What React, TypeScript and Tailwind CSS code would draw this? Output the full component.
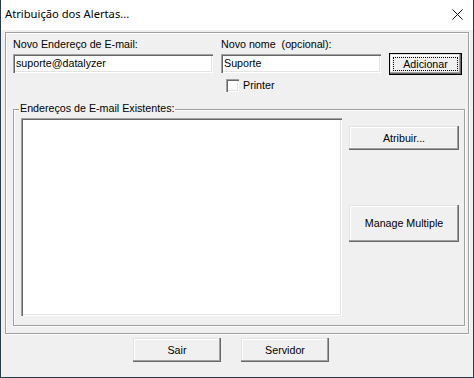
import React from "react";

const raised =
  "bg-[#f0f0f0] shadow-[inset_-1px_-1px_0_#696969,inset_-2px_-2px_0_#a0a0a0,inset_1px_1px_0_#e3e3e3,inset_2px_2px_0_#fff] flex items-center justify-center";
const sunken =
  "bg-white shadow-[inset_1px_1px_0_#a0a0a0,inset_2px_2px_0_#696969,inset_-1px_-1px_0_#fff,inset_-2px_-2px_0_#e3e3e3]";

function Field({ value }: { value: string }) {
  return (
    <div className={`${sunken} h-[19px] flex items-center pl-[3px] leading-[13px]`}>
      {value}
    </div>
  );
}

export default function App() {
  return (
    <div className="w-[474px] h-[378px] flex flex-col bg-[#f0f0f0] border-x border-b border-[#2b3b4e] overflow-hidden text-black font-['Liberation_Sans',Arial,sans-serif] text-[10.7px]">
      {/* title bar */}
      <div className="h-[30px] shrink-0 bg-white flex items-center justify-between pl-[4px] pr-[10px] pb-[1px]">
        <span className="font-['Noto_Sans',sans-serif] text-[11.2px] text-black">
          Atribuição dos Alertas...
        </span>
        <svg width="11" height="11" viewBox="0 0 11 11">
          <path d="M0.5 0.5 L10.5 10.5 M10.5 0.5 L0.5 10.5" stroke="#111" strokeWidth="1" />
        </svg>
      </div>

      <div className="flex-1 flex flex-col pl-[4px] pt-[2px]">
        {/* outer frame */}
        <div className="w-[464px] h-[302px] border border-[#a0a0a0] shadow-[1px_1px_0_#fff,inset_1px_1px_0_#fff] flex flex-col">
          <div className="flex pl-[7px] pt-[5px]">
            <div className="w-[200px] flex flex-col">
              <div className="h-[13px] leading-[13px]">Novo Endereço de E-mail:</div>
              <div className="mt-[3px]">
                <Field value="suporte@datalyzer" />
              </div>
            </div>
            <div className="w-[160px] ml-[8px] flex flex-col">
              <div className="h-[13px] leading-[13px] whitespace-pre">Novo nome  (opcional):</div>
              <div className="mt-[3px]">
                <Field value="Suporte" />
              </div>
              <div className="mt-[6px] pl-[5px] flex items-center">
                <div className={`${sunken} w-[13px] h-[13px]`} />
                <span className="ml-[4px] leading-[13px]">Printer</span>
              </div>
            </div>
            <div className="ml-[8px] mt-[15px] w-[73px] h-[22px] border border-black">
              <div className={`${raised} w-full h-full p-[3px]`}>
                <div className="w-full h-full border border-dotted border-black flex items-center justify-center leading-[13px]">
                  Adicionar
                </div>
              </div>
            </div>
          </div>

          {/* group box */}
          <div className="relative mt-[17px] ml-[7px] w-[452px] h-[217px] border border-[#a0a0a0] shadow-[1px_1px_0_#fff,inset_1px_1px_0_#fff]">
            <div className="absolute left-[5px] top-[-8px] px-[1px] bg-[#f0f0f0] leading-[13px]">
              Endereços de E-mail Existentes:
            </div>
            <div className="flex pl-[7px] pt-[8px]">
              <div className={`${sunken} w-[321px] h-[198px]`} />
              <div className="ml-[7px] flex flex-col">
                <div className={`${raised} mt-[8px] w-[110px] h-[24px]`}>Atribuir...</div>
                <div className={`${raised} mt-[55px] w-[110px] h-[37px]`}>Manage Multiple</div>
              </div>
            </div>
          </div>
        </div>

        {/* bottom buttons */}
        <div className="flex pl-[128px] mt-[4px] gap-[20px]">
          <div className={`${raised} w-[88px] h-[24px]`}>Sair</div>
          <div className={`${raised} w-[88px] h-[24px]`}>Servidor</div>
        </div>
      </div>
    </div>
  );
}
